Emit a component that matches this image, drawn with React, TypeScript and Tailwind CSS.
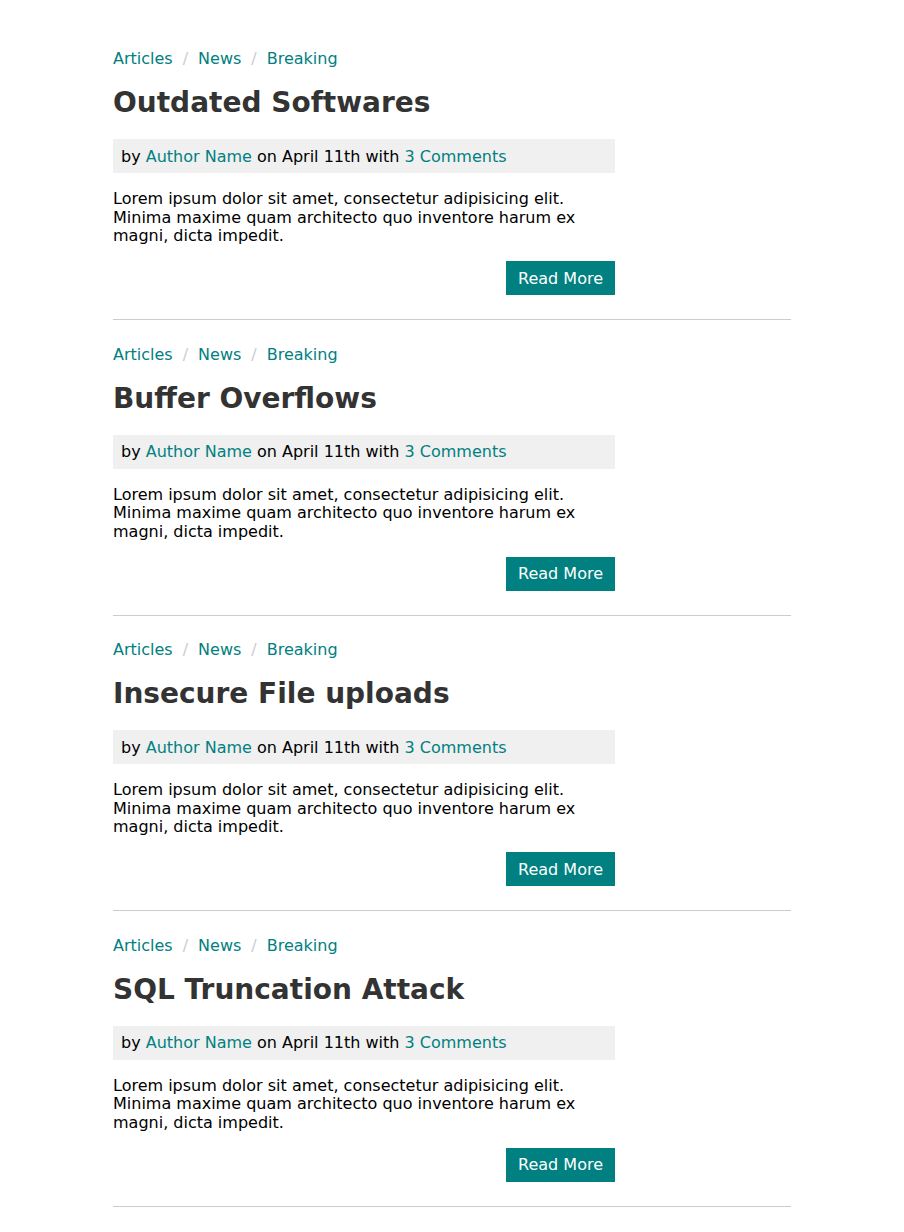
const posts = [
  'Outdated Softwares',
  'Buffer Overflows',
  'Insecure File uploads',
  'SQL Truncation Attack',
];

const Post = ({ title }: { title: string }) => (
  <article className="flex flex-col">
    <nav className="flex items-center text-base leading-[normal] text-[#008080]">
      <a href="#">Articles</a>
      <span className="mx-[10px] text-[#ccc]">/</span>
      <a href="#">News</a>
      <span className="mx-[10px] text-[#ccc]">/</span>
      <a href="#">Breaking</a>
    </nav>
    <h2 className="mt-[18px] text-[28px] font-bold leading-[normal] text-[#333]">{title}</h2>
    <div className="mt-[20px] w-[502px] bg-[#f0f0f0] px-2 py-[7.5px] leading-[normal] text-black">
      by <a href="#" className="text-[#008080]">Author Name</a> on April 11th with{' '}
      <a href="#" className="text-[#008080]">3 Comments</a>
    </div>
    <p className="mt-[17px] w-[502px] leading-[18.5px] text-black">
      Lorem ipsum dolor sit amet, consectetur adipisicing elit. Minima maxime quam architecto quo
      inventore harum ex magni, dicta impedit.
    </p>
    <div className="mt-[15.5px] flex w-[502px] justify-end">
      <button className="bg-[#008080] px-3 py-[7.5px] leading-[normal] text-white">Read More</button>
    </div>
    <hr className="mt-6 mb-[24.5px] border-t border-[#ccc]" />
  </article>
);

export default function App() {
  return (
    <div className="min-h-screen bg-white font-['DejaVu_Sans',sans-serif] text-base">
      <main className="mx-auto w-3/4 pt-[49px]">
        {posts.map((t) => (
          <Post key={t} title={t} />
        ))}
      </main>
    </div>
  );
}
